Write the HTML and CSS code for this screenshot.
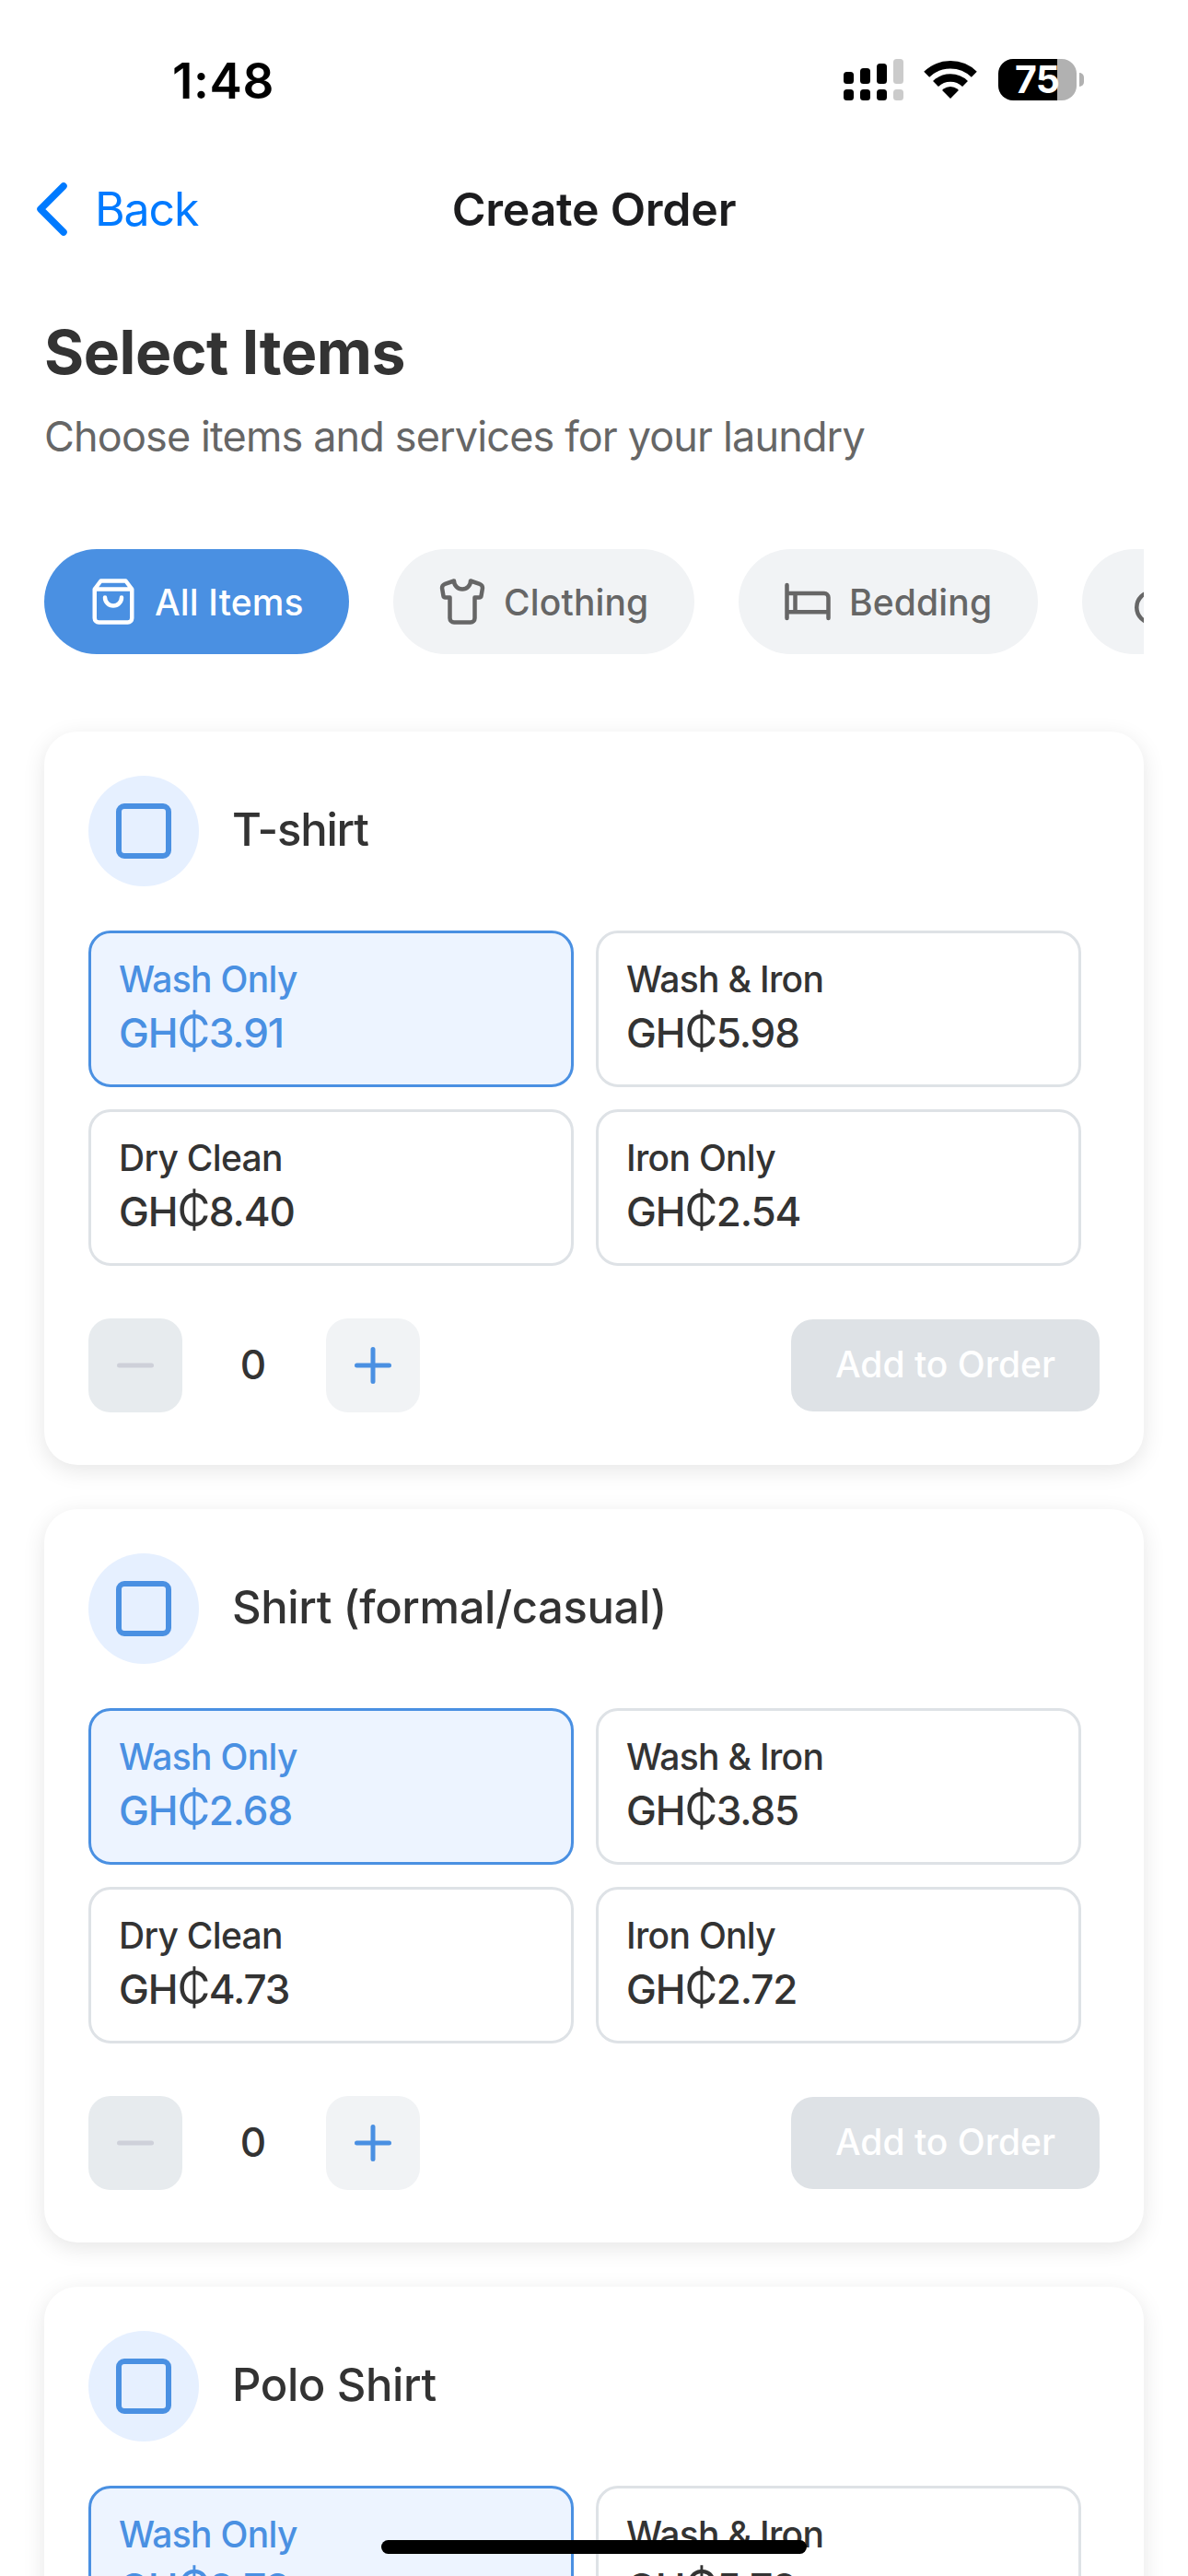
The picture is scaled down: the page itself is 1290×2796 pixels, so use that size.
FILE: index.html
```html
<!DOCTYPE html>
<html lang="en">
<head>
<meta charset="utf-8">
<title>Create Order</title>
<link rel="stylesheet" href="styles.css">
</head>
<body>
<svg width="0" height="0" class="defs">
  <symbol id="i-square" viewBox="0 0 24 24"><rect x="3" y="3" width="18" height="18" rx="2"/></symbol>
  <symbol id="i-minus" viewBox="0 0 24 24"><path d="M5 12h14"/></symbol>
  <symbol id="i-plus" viewBox="0 0 24 24"><path d="M5 12h14M12 5v14"/></symbol>
</svg>
<div class="screen">
  <header class="status">
    <span class="time">1:48</span>
    <div class="indicators">
      <svg class="signal" width="65" height="45" viewBox="0 0 65 45">
        <rect x="0" y="14" width="11" height="13" rx="3.5"/><rect x="18" y="10" width="11" height="17" rx="3.5"/><rect x="36" y="5" width="11" height="22" rx="3.5"/><rect class="off" x="54" y="0" width="11" height="27" rx="3.5"/>
        <rect x="0" y="33" width="11" height="12" rx="3.5"/><rect x="18" y="33" width="11" height="12" rx="3.5"/><rect x="36" y="33" width="11" height="12" rx="3.5"/><rect class="off" x="54" y="33" width="11" height="12" rx="3.5"/>
      </svg>
      <svg class="wifi" width="58" height="42" viewBox="0 0 58 42">
        <path d="M29 42 20.600 33.400Q20 32.500 21 31.700Q29 26.300 37 31.700Q38 32.500 37.400 33.400Z"/>
        <path class="arc" d="M13 26a23 23 0 0 1 32 0M3.200 15.800a37 37 0 0 1 51.600 0"/>
      </svg>
      <div class="battery"><span>75</span></div>
    </div>
  </header>
  <nav class="nav">
    <a class="back"><svg width="34" height="58" viewBox="0 0 34 58"><path d="M30 4 5 29 30 54"/></svg><span>Back</span></a>
    <h1>Create Order</h1>
  </nav>
  <main>
    <h2>Select Items</h2>
    <p class="sub">Choose items and services for your laundry</p>
    <div class="chips">
      <div class="chip on"><svg class="ic" viewBox="0 0 24 24"><path d="M6 2 3 6v14a2 2 0 0 0 2 2h14a2 2 0 0 0 2-2V6l-3-4ZM3 6h18M16 10a4 4 0 0 1-8 0"/></svg><span>All Items</span></div>
      <div class="chip c2"><svg class="ic" viewBox="0 0 24 24"><path d="M20.380 3.460 16 2a4 4 0 0 1-8 0L3.620 3.460a2 2 0 0 0-1.340 2.230l.58 3.470a1 1 0 0 0 .99.84H6v10c0 1.100.9 2 2 2h8a2 2 0 0 0 2-2V10h2.150a1 1 0 0 0 .99-.84l.58-3.470a2 2 0 0 0-1.340-2.230z"/></svg><span>Clothing</span></div>
      <div class="chip c3"><svg class="ic" viewBox="0 0 24 24"><path d="M2 4v16M2 8h18a2 2 0 0 1 2 2v10M2 17h20M6 8v9"/></svg><span>Bedding</span></div>
      <div class="chip c4"><svg class="ic" viewBox="0 0 24 24"><circle cx="12.500" cy="14.800" r="7.500"/></svg></div>
    </div>

    <section class="card">
      <div class="head"><div class="check"><svg><use href="#i-square"/></svg></div><h3 class="tight">T-shirt</h3></div>
      <div class="options">
        <div class="opt sel"><span>Wash Only</span><b>GH<i>₵</i>3.91</b></div>
        <div class="opt"><span>Wash &amp; Iron</span><b>GH<i>₵</i>5.98</b></div>
        <div class="opt"><span>Dry Clean</span><b>GH<i>₵</i>8.40</b></div>
        <div class="opt"><span>Iron Only</span><b>GH<i>₵</i>2.54</b></div>
      </div>
      <div class="foot"><div class="step minus"><svg><use href="#i-minus"/></svg></div><span class="qty">0</span><div class="step"><svg><use href="#i-plus"/></svg></div><div class="add">Add to Order</div></div>
    </section>

    <section class="card">
      <div class="head"><div class="check"><svg><use href="#i-square"/></svg></div><h3>Shirt (formal/casual)</h3></div>
      <div class="options">
        <div class="opt sel"><span>Wash Only</span><b>GH<i>₵</i>2.68</b></div>
        <div class="opt"><span>Wash &amp; Iron</span><b>GH<i>₵</i>3.85</b></div>
        <div class="opt"><span>Dry Clean</span><b>GH<i>₵</i>4.73</b></div>
        <div class="opt"><span>Iron Only</span><b>GH<i>₵</i>2.72</b></div>
      </div>
      <div class="foot"><div class="step minus"><svg><use href="#i-minus"/></svg></div><span class="qty">0</span><div class="step"><svg><use href="#i-plus"/></svg></div><div class="add">Add to Order</div></div>
    </section>

    <section class="card">
      <div class="head"><div class="check"><svg><use href="#i-square"/></svg></div><h3>Polo Shirt</h3></div>
      <div class="options">
        <div class="opt sel"><span>Wash Only</span><b>GH<i>₵</i>2.73</b></div>
        <div class="opt"><span>Wash &amp; Iron</span><b>GH<i>₵</i>5.72</b></div>
      </div>
    </section>
  </main>
  <div class="home"></div>
</div>
</body>
</html>
```
FILE: styles.css
```css
* { box-sizing: border-box; margin: 0; padding: 0; }
html, body { height: 2796px; overflow: hidden; background: #fff; }
body { font-family: Inter, "Liberation Sans", sans-serif; color: #333; }
.defs { position: absolute; }
.screen { position: relative; width: 1290px; height: 2796px; overflow: hidden; background: #fff; }
svg { display: block; flex: none; fill: none; }

.status { height: 177px; padding: 64px 113px 0 187px; display: flex; justify-content: space-between; align-items: flex-start; }
.time { font-size: 53px; font-weight: 600; line-height: 48px; color: #000; letter-spacing: 0.6px; }
.indicators { display: flex; align-items: flex-start; }
.signal rect { fill: #000; }
.signal .off { fill: #cbcbcb; }
.wifi { margin: 1px 23px 0 22px; fill: #000; }
.wifi .arc { fill: none; stroke: #000; stroke-width: 8.5; }
.battery { position: relative; width: 85px; height: 45px; margin-right: 8px; border-radius: 16px; background: linear-gradient(to right, #000 64px, #b1b1b1 64px); color: #fff; font-size: 41px; font-weight: 700; line-height: 45px; padding-left: 18px; letter-spacing: -0.8px; }
.battery::after { content: ""; position: absolute; left: 88px; top: 15px; width: 5px; height: 15px; border-radius: 0 6px 6px 0; background: #b1b1b1; }

.nav { position: relative; height: 99px; margin-bottom: 2px; display: flex; align-items: center; justify-content: center; }
.nav h1 { font-size: 50px; font-weight: 600; line-height: 60px; color: #1c1c1e; letter-spacing: -0.25px; }
.back { position: absolute; left: 39px; top: 20px; display: flex; align-items: center; gap: 30px; color: #007aff; font-size: 50px; line-height: 60px; letter-spacing: -1.1px; }
.back svg { stroke: currentColor; stroke-width: 7.5; stroke-linecap: round; stroke-linejoin: round; }

main { padding: 68px 48px 0; }
h2 { font-size: 66px; font-weight: 700; line-height: 72px; letter-spacing: -0.5px; }
.sub { margin-top: 29px; font-size: 45px; line-height: 54px; color: #666; letter-spacing: -0.86px; }
.chips { display: flex; gap: 48px; margin-top: 95px; overflow: hidden; }
.chip { flex: none; width: 331px; height: 114px; border-radius: 57px; padding-left: 48px; display: flex; align-items: center; gap: 18px; background: #f1f3f5; color: #666; font-size: 39px; font-weight: 500; letter-spacing: 0.15px; white-space: nowrap; }
.chip.on { background: #4a90e2; color: #fff; }
.chip.c2 { width: 327px; }
.chip.c3 { width: 325px; }
.ic { width: 54px; height: 54px; stroke: currentColor; stroke-width: 2; stroke-linecap: round; stroke-linejoin: round; }

.card { height: 796px; margin-top: 48px; padding: 48px; border-radius: 36px; background: #fff; box-shadow: 0 6px 24px rgba(0, 0, 0, 0.1); }
.chips + .card { margin-top: 84px; }
.head { display: flex; align-items: center; gap: 36px; }
.check { width: 120px; height: 120px; border-radius: 50%; background: #e6f0ff; display: grid; place-items: center; }
.check svg { width: 72px; height: 72px; stroke: #4a90e2; stroke-width: 2; stroke-linejoin: round; }
h3 { font-size: 49px; font-weight: 550; line-height: 60px; padding-bottom: 2px; letter-spacing: -0.4px; }
h3.tight { letter-spacing: -1.2px; }
.options { display: grid; grid-template-columns: 527px 527px; gap: 24px; margin-top: 48px; }
.opt { height: 170px; border: 3px solid #dee2e6; border-radius: 24px; padding: 24px 30px; background: #fff; }
.opt span, .opt b { display: block; white-space: nowrap; }
.opt span { font-size: 39px; font-weight: 500; line-height: 51px; letter-spacing: -0.7px; }
.opt b { margin-top: 5px; font-size: 44px; font-weight: 550; line-height: 57px; letter-spacing: -1.1px; }
.opt i { font-style: normal; font-weight: 400; font-size: 49px; line-height: 40px; letter-spacing: -1.5px; }
.opt.sel { border-color: #4a90e2; background: #edf4ff; color: #4a90e2; }
.foot { display: flex; align-items: center; margin-top: 57px; }
.step { width: 102px; height: 102px; border-radius: 24px; background: #f1f3f5; display: grid; place-items: center; }
.step svg { width: 60px; height: 60px; stroke: #4a90e2; stroke-width: 2; stroke-linecap: round; }
.step.minus { background: #e7ebee; }
.step.minus svg { stroke: #ced0d9; }
.qty { width: 156px; padding: 0 2px 3px 0; text-align: center; font-size: 44px; font-weight: 550; }
.add { width: 335px; height: 100px; margin-left: auto; border-radius: 24px; background: #dee2e6; color: #fff; font-size: 39px; font-weight: 550; line-height: 98px; text-align: center; }

.home { position: absolute; left: 414px; top: 2757px; width: 462px; height: 15px; border-radius: 8px; background: #000; }
```
